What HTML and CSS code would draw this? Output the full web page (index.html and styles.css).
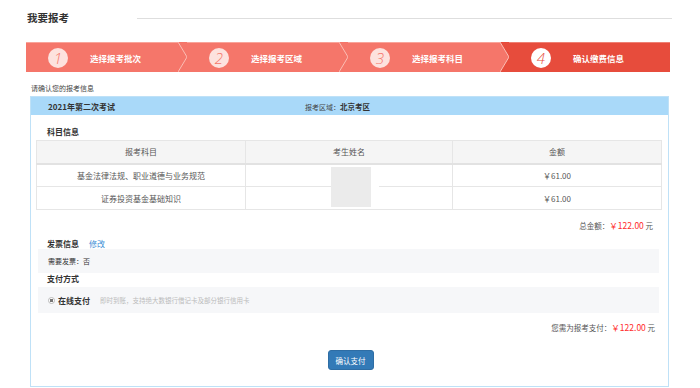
FILE: index.html
```html
<!DOCTYPE html>
<html lang="zh">
<head>
<meta charset="utf-8">
<link rel="stylesheet" href="styles.css">
</head>
<body>
<div class="page">
  <div class="title-row">
    <h1 class="title">我要报考</h1>
    <div class="title-line"></div>
  </div>

  <div class="steps">
    <div class="step next-light">
      <span class="num">1</span><span class="label">选择报考批次</span>
      <svg class="tip" width="9" height="30" viewBox="0 0 9 30"><rect class="tip-bg" width="9" height="30"/><polygon class="tip-fill" points="0,0 9,15 0,30"/><polyline class="tip-line" points="0,0 9,15 0,30"/></svg>
    </div>
    <div class="step next-light">
      <span class="num">2</span><span class="label">选择报考区域</span>
      <svg class="tip" width="9" height="30" viewBox="0 0 9 30"><rect class="tip-bg" width="9" height="30"/><polygon class="tip-fill" points="0,0 9,15 0,30"/><polyline class="tip-line" points="0,0 9,15 0,30"/></svg>
    </div>
    <div class="step next-dark">
      <span class="num">3</span><span class="label">选择报考科目</span>
      <svg class="tip" width="9" height="30" viewBox="0 0 9 30"><rect class="tip-bg" width="9" height="30"/><polygon class="tip-fill" points="0,0 9,15 0,30"/><polyline class="tip-line" points="0,0 9,15 0,30"/></svg>
    </div>
    <div class="step active">
      <span class="num">4</span><span class="label">确认缴费信息</span>
    </div>
  </div>

  <p class="hint">请确认您的报考信息</p>

  <div class="card">
    <div class="card-head">
      <span class="exam">2021年第二次考试</span>
      <span class="area">报考区域：<b>北京考区</b></span>
    </div>
    <div class="card-body">
      <h2 class="sec">科目信息</h2>
      <div class="table-wrap">
        <table class="subjects">
          <thead>
            <tr><th class="c1">报考科目</th><th class="c2">考生姓名</th><th class="c3">金额</th></tr>
          </thead>
          <tbody>
            <tr><td>基金法律法规、职业道德与业务规范</td><td></td><td>￥61.00</td></tr>
            <tr><td>证券投资基金基础知识</td><td></td><td>￥61.00</td></tr>
          </tbody>
        </table>
        <div class="name-mask"></div>
      </div>

      <div class="total">总金额：<span class="price">￥122.00</span> 元</div>

      <div class="sec-row"><h2 class="sec">发票信息</h2><a class="link">修改</a></div>
      <div class="panel invoice">需要发票：否</div>

      <h2 class="sec pay-title">支付方式</h2>
      <div class="panel pay">
        <span class="radio"></span>
        <span class="pay-name">在线支付</span>
        <span class="pay-desc">即时到账，支持绝大数银行借记卡及部分银行信用卡</span>
      </div>

      <div class="total total2">您需为报考支付：<span class="price">￥122.00</span> 元</div>

      <div class="actions"><button class="btn">确认支付</button></div>
    </div>
  </div>
</div>
</body>
</html>
```

FILE: styles.css
```css
* { box-sizing: border-box; }
html, body { margin: 0; padding: 0; background: #fff; }
body {
  font-family: "Noto Sans CJK SC", "Noto Sans", sans-serif;
  font-size: 8px;
  color: #444;
  width: 700px;
  height: 388px;
  overflow: hidden;
}
.page { width: 700px; }

.title-row {
  height: 36px;
  display: flex;
  align-items: center;
  padding-left: 27px;
  padding-right: 28px;
}
.title {
  margin: 0;
  font-size: 10.5px;
  font-weight: 700;
  color: #333;
  line-height: 14px;
  width: 110px;
}
.title-line {
  flex: 1;
  height: 1px;
  background: #dedede;
}

.steps {
  display: flex;
  height: 30px;
  margin: 6px 30px 0 26px;
}
.step {
  flex: 1;
  position: relative;
  display: flex;
  align-items: center;
  background: #f5766a;
  --cur: #f5766a;
  --next: #f5766a;
  border-top: 1px solid #f9a49a;
}
.step.next-dark { --next: #e74c3c; }
.step.active { background: #e74c3c; --cur: #e74c3c; border-top-color: #ef8073; }
.num {
  width: 20px;
  height: 20px;
  margin-left: 22px;
  border-radius: 50%;
  background: #fde2de;
  color: #f5766a;
  font-family: "Open Sans", "DejaVu Sans", sans-serif;
  font-style: italic;
  font-weight: 300;
  font-size: 15px;
  line-height: 20px;
  text-align: center;
}
.step.active .num { background: #fff; color: #e74c3c; }
.label {
  margin-left: 22px;
  color: #fff;
  font-weight: 700;
  font-size: 8.5px;
  line-height: 12px;
}
.tip {
  position: absolute;
  right: 0;
  top: -1px;
  display: block;
}
.tip-bg { fill: var(--next); }
.tip-fill { fill: var(--cur); }
.tip-line { fill: none; stroke: #fbbdb4; stroke-width: 1; }

.hint {
  margin: 11px 0 3px 31px;
  font-size: 7px;
  line-height: 10px;
  color: #444;
}

.card {
  margin-left: 30px;
  width: 639px;
  border: 1px solid #bfe1f7;
}
.card-head {
  height: 18px;
  background: #a9d9f9;
  display: flex;
  align-items: center;
  padding-left: 17px;
}
.exam {
  font-weight: 700;
  font-size: 8px;
  color: #333;
  width: 257px;
}
.area { font-size: 7px; color: #444; }
.area b { font-weight: 700; font-size: 7.5px; color: #333; }

.card-body {
  padding: 12px 7px 16px 5px;
}
.sec {
  margin: 0 0 3px 11px;
  font-size: 8px;
  line-height: 10px;
  font-weight: 700;
  color: #333;
}

.table-wrap { position: relative; }
.subjects {
  width: 625px;
  border-collapse: collapse;
  table-layout: fixed;
}
.subjects th, .subjects td {
  border: 1px solid #e6e6e6;
  height: 23px;
  padding: 0;
  text-align: center;
  font-weight: 400;
  font-size: 8px;
  color: #555;
}
.subjects th { background: #f5f5f5; border-bottom: 2px solid #e2e2e2; }
.c1 { width: 209px; }
.c2 { width: 207px; }
.c3 { width: 209px; }
.name-mask {
  position: absolute;
  left: 295px;
  top: 27px;
  width: 40px;
  height: 40px;
  background: #ebebeb;
  box-shadow: 8px 0 0 #fff;
}

.total {
  margin-top: 10px;
  padding-right: 8px;
  text-align: right;
  font-size: 7.5px;
  line-height: 10px;
  color: #555;
}
.price { color: #ff2b2b; font-size: 8.5px; }
.total2 { margin-top: 9px; padding-right: 6px; }

.sec-row {
  display: flex;
  align-items: center;
  margin-top: 8px;
}
.sec-row .sec { margin-bottom: 0; }
.link {
  margin-left: 10px;
  color: #3d8fd6;
  font-size: 8px;
  line-height: 10px;
}

.panel {
  margin: 0 2px;
  background: #f6f7f9;
  display: flex;
  align-items: center;
  padding-left: 10px;
}
.invoice { height: 24px; font-size: 7px; color: #333; }
.pay-title { margin-top: 1px; margin-bottom: 3px; }
.pay { height: 26px; }
.radio {
  width: 7px;
  height: 7px;
  border-radius: 50%;
  border: 1px solid #bbb;
  background: radial-gradient(circle, #777 0 1.6px, #fff 2px);
}
.pay-name {
  margin-left: 3px;
  font-weight: 700;
  font-size: 8px;
  color: #333;
}
.pay-desc {
  margin-left: 10px;
  font-size: 6.5px;
  color: #bbb;
}

.actions {
  margin-top: 17px;
  display: flex;
  justify-content: center;
  padding-left: 4px;
}
.btn {
  width: 46px;
  height: 20px;
  border: 1px solid #2e6da4;
  border-radius: 3px;
  background: #337ab7;
  color: #fff;
  font-family: inherit;
  font-size: 7.5px;
  padding: 0;
}
```
